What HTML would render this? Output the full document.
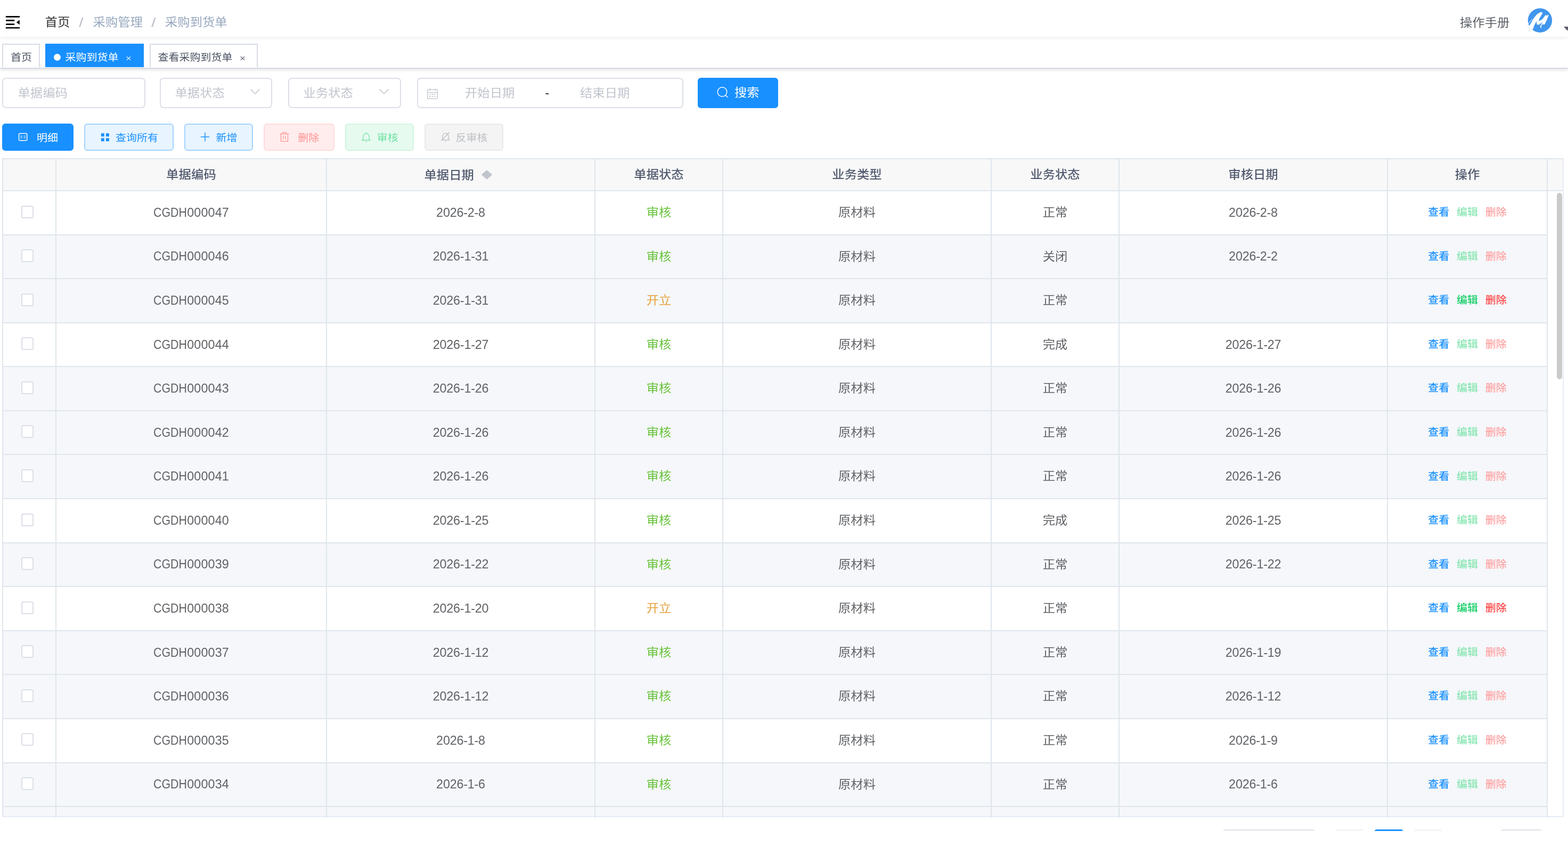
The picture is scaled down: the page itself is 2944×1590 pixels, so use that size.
<!DOCTYPE html>
<html lang="zh-CN">
<head>
<meta charset="utf-8">
<title>采购到货单</title>
<style>
*{box-sizing:border-box;margin:0;padding:0}
html,body{width:2944px;height:1590px;overflow:hidden;background:#fff}
#app{position:absolute;left:0;top:0;width:2944px;height:1590px;overflow:hidden;will-change:transform}
body{position:relative;font-family:"Liberation Sans","Noto Sans CJK SC",sans-serif;font-size:23.33px;color:#606266;-webkit-font-smoothing:antialiased}
.k{display:inline-block;transform:scaleY(.92);transform-origin:50% 50%}
.fc{display:flex;align-items:center;justify-content:center;white-space:nowrap}
/* navbar */
#nav{position:absolute;left:0;top:0;width:2944px;height:69px;background:#fff;box-shadow:0 2px 7px rgba(0,21,41,.08);z-index:3}
#ham{position:absolute;left:10px;top:29.8px;width:28px;height:24px}
.bc{position:absolute;top:-0.4px;height:84px;line-height:84px;font-size:23.33px;white-space:nowrap}
.bc.h{color:#303133}
.bc.l{color:#97a8be}
.bc.s{color:#c0c4cc;font-weight:700;display:inline-block;transform:skewX(-8deg)}
#manual{position:absolute;left:2741px;top:0;height:86px;line-height:86px;font-size:23.33px;color:#5a5e66;white-space:nowrap}
#avatar{position:absolute;left:2866px;top:15px;width:50px;height:48px}
#caret{position:absolute;left:2936px;top:49.8px;width:14px;height:8px}
/* tags */
#tags{position:absolute;left:0;top:69px;width:2944px;height:60px;background:#fff;border-bottom:2px solid #d8dce5;box-shadow:0 2px 6px 0 rgba(0,0,0,.12),0 0 5px 0 rgba(0,0,0,.04);z-index:2}
.tag{position:absolute;top:13px;height:44px;border:2px solid #d8dce5;border-bottom:0;font-size:20px;color:#495060;background:#fff;white-space:nowrap}
.tag span{position:absolute;top:1.5px;height:44px;line-height:44px}
.tag.act{background:#1890ff;border-color:#1890ff;color:#fff}
.tag .dot{position:absolute;width:13.4px;height:13.4px;border-radius:50%;background:#fff}
.tag .x{font-size:17px}
/* form */
.inp{position:absolute;top:146px;height:57px;border:2px solid #dcdfe6;border-radius:7px;background:#fff;color:#c0c4cc;font-size:23.33px}
.inp span{position:absolute;top:0.6px;height:53px;line-height:53px;white-space:nowrap}
.inp svg{position:absolute}
.btn{position:absolute;border-radius:6px;white-space:nowrap}
.btn span{position:absolute;top:0;white-space:nowrap}
.btn svg{position:absolute}
#search{left:1310px;top:146px;width:151px;height:57px;background:#1890ff;color:#fff;font-size:23.33px}
.b2{top:232px;height:51px;font-size:20px;border:2px solid}
.b2 span{top:1.7px;height:47px;line-height:47px}
/* table */
#tb{position:absolute;left:4px;top:297px;width:2932px;height:1237px;border:2px solid #dfe6ec;border-right-color:#e6ebf5;border-bottom-color:#e6ebf5;overflow:hidden;background:#fff}
#tb .in{position:absolute;left:-6px;top:-299px;width:2944px;height:1590px}
.th,.tr{position:absolute;left:6px;width:2900px}
.th .c{padding-bottom:4.8px}
.th{top:299px;height:60px;background:#f8f8f9;border-bottom:2px solid #dfe6ec;color:#515a6e;font-weight:500;width:2928px}
.tr{height:82.58px;border-bottom:2px solid #dfe6ec;background:#fff}
.tr.g{background:#f5f7fa}
.c{position:absolute;top:0;height:100%;border-right:2px solid #dfe6ec;display:flex;align-items:center;justify-content:center;white-space:nowrap}
.c1{left:0;width:100px}
.c2{left:100px;width:508px}
.c3{left:608px;width:504px}
.c4{left:1112px;width:240px}
.c5{left:1352px;width:504px}
.c6{left:1856px;width:240px}
.c7{left:2096px;width:504px}
.c8{left:2600px;width:300px}
.c9{left:2900px;width:28px;border-right:0}
.cb{position:absolute;left:34.4px;top:26.5px;width:22.5px;height:24px;border:2px solid #dcdfe6;border-radius:3.5px;background:#fff}
.z{padding-bottom:4.6px}
.L{display:inline-block;transform:scaleX(.917);transform-origin:0 50%;margin-right:-5.6px;letter-spacing:0}
.c2{letter-spacing:.13px}
.D{letter-spacing:-.2px}
.s-ok{color:#67c23a}
.s-open{color:#e6a23c}
.a{font-size:20px;font-weight:500;margin:0 6.85px;display:inline-block;transform:scaleY(.94)}
.c8.z{padding-bottom:3.4px}
.a.v{color:#1890ff}
.a.e{color:#89e6b3}
.a.d{color:#ffa4a4}
.a.e.on{color:#13ce66}
.a.d.on{color:#ff4949}
.sort{position:absolute;left:289.9px;top:19.5px;width:20px;height:18px}
.tk{position:absolute;top:1532px;width:2px;height:3px;background:#dfe6ec}
#thumb{position:absolute;left:2923px;top:362px;width:10px;height:350px;border-radius:5px;background:#cacaca}
.pg{position:absolute;top:1557px;height:40px}
#mask{position:absolute;left:0;top:1560px;width:2944px;height:30px;background:#fff}
</style>
</head>
<body>
<div id="app">
<div id="nav">
  <svg id="ham" viewBox="0 0 28 24"><rect x="0.6" y="0" width="26.6" height="2.7" rx="1.2" fill="#000"/><rect x="0.9" y="7.1" width="16.5" height="2.7" rx="1.2" fill="#000"/><rect x="0.9" y="14.2" width="16.5" height="2.7" rx="1.2" fill="#000"/><rect x="0.6" y="21" width="26.6" height="2.6" rx="1.2" fill="#000"/><path d="M20.7 11.9 L26.8 7.5 L26.8 16.3 Z" fill="#000"/></svg>
  <span class="bc h k" style="left:84.6px">首页</span>
  <span class="bc s" style="left:148.6px">/</span>
  <span class="bc l k" style="left:174.6px">采购管理</span>
  <span class="bc s" style="left:285.1px">/</span>
  <span class="bc l k" style="left:310px">采购到货单</span>
  <span id="manual" class="k">操作手册</span>
  <svg id="avatar" viewBox="0 0 50 48"><circle cx="25.4" cy="23.3" r="22.7" fill="#4096ee"/><path d="M5.1 34.4 L10.3 25.4 L14.8 17.9 L20.4 11.6 L26.0 8.2 L28.7 8.0 L29.8 9.3 L28.7 12.0 L26.0 16.4 L23.8 20.2 L22.9 23.2 L23.6 24.9 L27.9 22.8 L31.6 19.4 L34.6 14.9 L36.5 13.3 L38.0 14.6 L39.5 14.2 L41.7 13.1 L39.1 19.4 L36.5 25.4 L34.1 30.6 L29.0 30.8 L27.9 33.6 L27.5 37.0 L25.9 36.6 L26.4 33.6 L28.7 29.9 L31.6 23.2 L27.9 28.0 L24.2 30.6 L21.2 31.4 L19.5 29.9 L19.3 26.9 L20.4 23.2 L17.4 26.9 L14.4 32.5 L12.2 39.2 L10.7 40.6 L5.5 44.5 L0.2 34.4 Z" fill="#fff" stroke="#fff" stroke-width="0.6" stroke-linejoin="round"/><path d="M2.9 29.9 L11.1 20.6" stroke="#fff" stroke-width="1" fill="none"/><path d="M3.6 30.6 C1.2 33 0.8 36 3.2 36.6 L5.6 35.2 M4.6 36.4 L6.8 38.4 L4.8 39 L6.4 41 L4.6 41.8 L6 43.8 L5.2 44.8 L10.4 41" stroke="#b9d7f8" stroke-width="0.7" fill="none" stroke-dasharray="1.6 0.9"/></svg>
  <svg id="caret" viewBox="0 0 14 8"><path d="M0 0 L13.2 0 L6.6 7.6 Z" fill="#5a5e66"/></svg>
</div>
<div id="tags">
  <div class="tag" style="left:4px;width:71px"><span class="k" style="left:13.9px">首页</span></div>
  <div class="tag act" style="left:85px;width:185px"><i class="dot" style="left:13.7px;top:16.5px"></i><span class="k" style="left:35.4px">采购到货单</span><svg style="position:absolute;left:150.4px;top:21.2px" width="9" height="9" viewBox="0 0 9 9"><path d="M0.8 1.1 L8.2 7.9 M8.2 1.1 L0.8 7.9" stroke="#fff" stroke-width="1.15" fill="none"/></svg></div>
  <div class="tag" style="left:281px;width:203px"><span class="k" style="left:13.5px">查看采购到货单</span><svg style="position:absolute;left:167.7px;top:21.2px" width="9" height="9" viewBox="0 0 9 9"><path d="M0.8 1.1 L8.2 7.9 M8.2 1.1 L0.8 7.9" stroke="#495060" stroke-width="1.15" fill="none"/></svg></div>
</div>

<div class="inp" style="left:4px;width:269px"><span class="k" style="left:27.5px">单据编码</span></div>
<div class="inp" style="left:300px;width:211px"><span class="k" style="left:26.5px">单据状态</span>
  <svg style="left:166.2px;top:17.4px" width="22" height="14" viewBox="0 0 22 14"><path d="M2.6 2.6 L11 11 L19.4 2.6" fill="none" stroke="#c0c4cc" stroke-width="1.5"/></svg></div>
<div class="inp" style="left:541px;width:212px"><span class="k" style="left:26.6px">业务状态</span>
  <svg style="left:167.2px;top:17.4px" width="22" height="14" viewBox="0 0 22 14"><path d="M2.6 2.6 L11 11 L19.4 2.6" fill="none" stroke="#c0c4cc" stroke-width="1.5"/></svg></div>
<div class="inp" style="left:783px;width:500px">
  <svg style="left:14.8px;top:15.6px" width="24" height="24" viewBox="0 0 24 24"><g fill="none" stroke="#c0c4cc" stroke-width="1.3"><rect x="2.6" y="4.4" width="18.8" height="17" rx="0.8"/><path d="M2.6 9.6 H21.4 M7.2 2 V6.6 M16.8 2 V6.6"/></g><g fill="#c0c4cc"><rect x="6" y="12.4" width="2.6" height="1.7"/><rect x="10.7" y="12.4" width="2.6" height="1.7"/><rect x="15.4" y="12.4" width="2.6" height="1.7"/><rect x="6" y="16.4" width="2.6" height="1.7"/><rect x="10.7" y="16.4" width="2.6" height="1.7"/><rect x="15.4" y="16.4" width="2.6" height="1.7"/></g></svg>
  <span class="k" style="left:88px">开始日期</span><span style="left:238.5px;top:0;color:#303133">-</span><span class="k" style="left:304px">结束日期</span></div>
<div class="btn" id="search">
  <svg style="left:34px;top:16px" width="26" height="26" viewBox="0 0 26 26"><circle cx="12" cy="10.5" r="8.75" fill="none" stroke="#fff" stroke-width="1.45"/><path d="M18.3 16.8 L22 20.6" stroke="#fff" stroke-width="1.45" stroke-linecap="round"/></svg>
  <span class="k" style="left:68.9px;top:0.3px;height:57px;line-height:57px">搜索</span></div>

<div class="btn b2" style="left:4px;width:134px;background:#1890ff;border-color:#1890ff;color:#fff">
  <svg style="left:28px;top:15px" width="20" height="17" viewBox="0 0 20 17"><rect x="1.5" y="1.5" width="15.2" height="13.2" rx="2" fill="none" stroke="#fff" stroke-width="1.5"/><path d="M5.6 5 V11.2 M12.7 5 V11.2" stroke="#fff" stroke-width="1.1"/><rect x="8.5" y="6" width="1.3" height="1.3" fill="#fff"/><rect x="8.5" y="9" width="1.3" height="1.3" fill="#fff"/></svg>
  <span class="k" style="left:63px">明细</span></div>
<div class="btn b2" style="left:158px;width:168px;background:#e8f4ff;border-color:#a3d3ff;color:#1890ff">
  <svg style="left:28.5px;top:14.8px" width="17" height="17" viewBox="0 0 17 17"><g fill="#1890ff"><rect x="0.8" y="1.2" width="6" height="6" rx="0.5"/><rect x="9.9" y="1.2" width="6" height="6" rx="0.5"/><rect x="0.8" y="10.3" width="6" height="6" rx="0.5"/><rect x="9.9" y="10.3" width="6" height="6" rx="0.5"/></g></svg>
  <span class="k" style="left:57px">查询所有</span></div>
<div class="btn b2" style="left:346px;width:129px;background:#e8f4ff;border-color:#a3d3ff;color:#1890ff">
  <svg style="left:28px;top:14px" width="18" height="18" viewBox="0 0 18 18"><path d="M9 0.8 V17.2 M0.8 9 H17.2" stroke="#1890ff" stroke-width="1.5"/></svg>
  <span class="k" style="left:57.4px">新增</span></div>
<div class="btn b2" style="left:495px;width:133px;background:#ffeded;border-color:#ffdbdb;color:#ff9292">
  <svg style="left:27.8px;top:12.8px" width="18" height="20" viewBox="0 0 18 20"><g fill="none" stroke="#ff9292" stroke-width="1.25"><path d="M0.4 4.4 H17.6"/><path d="M6 4.2 V1.7 H12 V4.2"/><path d="M2.5 4.6 V18.4 H15.5 V4.6"/><path d="M7 7.6 V14.6 M11 7.6 V14.6"/></g></svg>
  <span class="k" style="left:62.2px">删除</span></div>
<div class="btn b2" style="left:648px;width:129px;background:#e7faf0;border-color:#d0f5e0;color:#71e2a3">
  <svg style="left:27.5px;top:13.5px" width="19" height="20" viewBox="0 0 19 20"><g fill="none" stroke="#71e2a3" stroke-width="1.3"><path d="M3.8 15 V9 C3.8 5.2 6.2 2.7 9.5 2.7 C12.8 2.7 15.2 5.2 15.2 9 V15"/><path d="M0.8 15.3 H18.2"/><path d="M8.3 18 H10.7"/><path d="M9.5 1 V2.7"/></g></svg>
  <span class="k" style="left:57.8px">审核</span></div>
<div class="btn b2" style="left:797px;width:148px;background:#f4f4f5;border-color:#e9e9eb;color:#bcbec2">
  <svg style="left:27.5px;top:13px" width="19" height="20" viewBox="0 0 19 20"><g fill="none" stroke="#bcbec2" stroke-width="1.3"><path d="M3.8 15.4 V9.4 C3.8 5.6 6.2 3.1 9.5 3.1 C12.8 3.1 15.2 5.6 15.2 9.4 V15.4"/><path d="M0.8 15.7 H18.2"/><path d="M8.3 18.4 H10.7"/><path d="M16.6 1.2 L2.6 16.2"/></g></svg>
  <span class="k" style="left:56.6px">反审核</span></div>

<div id="tb"><div class="in">
<div class="th"><div class="c c1"></div><div class="c c2"><span class="k">单据编码</span></div><div class="c c3" style="padding-right:43.6px;padding-bottom:2.6px"><span class="k">单据日期</span><svg class="sort" viewBox="0 0 20 18"><path d="M10 0.3 L19.9 8.6 L18.6 9 L19.9 9.4 L10 17.7 L0.1 9.4 L1.4 9 L0.1 8.6 Z" fill="#c0c4cc"/></svg></div><div class="c c4"><span class="k">单据状态</span></div><div class="c c5"><span class="k">业务类型</span></div><div class="c c6"><span class="k">业务状态</span></div><div class="c c7"><span class="k">审核日期</span></div><div class="c c8"><span class="k">操作</span></div><div class="c c9"></div></div>
<div class="tr" style="top:359.0px"><div class="c c1"><i class="cb"></i></div><div class="c c2"><span class="L">CGDH</span>000047</div><div class="c c3 D">2026-2-8</div><div class="c c4 z s-ok"><span class="k">审核</span></div><div class="c c5 z"><span class="k">原材料</span></div><div class="c c6 z"><span class="k">正常</span></div><div class="c c7 D">2026-2-8</div><div class="c c8 z"><span class="a v">查看</span><span class="a e">编辑</span><span class="a d">删除</span></div></div>
<div class="tr g" style="top:441.58px"><div class="c c1"><i class="cb"></i></div><div class="c c2"><span class="L">CGDH</span>000046</div><div class="c c3 D">2026-1-31</div><div class="c c4 z s-ok"><span class="k">审核</span></div><div class="c c5 z"><span class="k">原材料</span></div><div class="c c6 z"><span class="k">关闭</span></div><div class="c c7 D">2026-2-2</div><div class="c c8 z"><span class="a v">查看</span><span class="a e">编辑</span><span class="a d">删除</span></div></div>
<div class="tr g" style="top:524.16px"><div class="c c1"><i class="cb"></i></div><div class="c c2"><span class="L">CGDH</span>000045</div><div class="c c3 D">2026-1-31</div><div class="c c4 z s-open"><span class="k">开立</span></div><div class="c c5 z"><span class="k">原材料</span></div><div class="c c6 z"><span class="k">正常</span></div><div class="c c7 D"></div><div class="c c8 z"><span class="a v">查看</span><span class="a e on">编辑</span><span class="a d on">删除</span></div></div>
<div class="tr" style="top:606.74px"><div class="c c1"><i class="cb"></i></div><div class="c c2"><span class="L">CGDH</span>000044</div><div class="c c3 D">2026-1-27</div><div class="c c4 z s-ok"><span class="k">审核</span></div><div class="c c5 z"><span class="k">原材料</span></div><div class="c c6 z"><span class="k">完成</span></div><div class="c c7 D">2026-1-27</div><div class="c c8 z"><span class="a v">查看</span><span class="a e">编辑</span><span class="a d">删除</span></div></div>
<div class="tr g" style="top:689.32px"><div class="c c1"><i class="cb"></i></div><div class="c c2"><span class="L">CGDH</span>000043</div><div class="c c3 D">2026-1-26</div><div class="c c4 z s-ok"><span class="k">审核</span></div><div class="c c5 z"><span class="k">原材料</span></div><div class="c c6 z"><span class="k">正常</span></div><div class="c c7 D">2026-1-26</div><div class="c c8 z"><span class="a v">查看</span><span class="a e">编辑</span><span class="a d">删除</span></div></div>
<div class="tr g" style="top:771.9px"><div class="c c1"><i class="cb"></i></div><div class="c c2"><span class="L">CGDH</span>000042</div><div class="c c3 D">2026-1-26</div><div class="c c4 z s-ok"><span class="k">审核</span></div><div class="c c5 z"><span class="k">原材料</span></div><div class="c c6 z"><span class="k">正常</span></div><div class="c c7 D">2026-1-26</div><div class="c c8 z"><span class="a v">查看</span><span class="a e">编辑</span><span class="a d">删除</span></div></div>
<div class="tr g" style="top:854.48px"><div class="c c1"><i class="cb"></i></div><div class="c c2"><span class="L">CGDH</span>000041</div><div class="c c3 D">2026-1-26</div><div class="c c4 z s-ok"><span class="k">审核</span></div><div class="c c5 z"><span class="k">原材料</span></div><div class="c c6 z"><span class="k">正常</span></div><div class="c c7 D">2026-1-26</div><div class="c c8 z"><span class="a v">查看</span><span class="a e">编辑</span><span class="a d">删除</span></div></div>
<div class="tr" style="top:937.06px"><div class="c c1"><i class="cb"></i></div><div class="c c2"><span class="L">CGDH</span>000040</div><div class="c c3 D">2026-1-25</div><div class="c c4 z s-ok"><span class="k">审核</span></div><div class="c c5 z"><span class="k">原材料</span></div><div class="c c6 z"><span class="k">完成</span></div><div class="c c7 D">2026-1-25</div><div class="c c8 z"><span class="a v">查看</span><span class="a e">编辑</span><span class="a d">删除</span></div></div>
<div class="tr g" style="top:1019.64px"><div class="c c1"><i class="cb"></i></div><div class="c c2"><span class="L">CGDH</span>000039</div><div class="c c3 D">2026-1-22</div><div class="c c4 z s-ok"><span class="k">审核</span></div><div class="c c5 z"><span class="k">原材料</span></div><div class="c c6 z"><span class="k">正常</span></div><div class="c c7 D">2026-1-22</div><div class="c c8 z"><span class="a v">查看</span><span class="a e">编辑</span><span class="a d">删除</span></div></div>
<div class="tr" style="top:1102.22px"><div class="c c1"><i class="cb"></i></div><div class="c c2"><span class="L">CGDH</span>000038</div><div class="c c3 D">2026-1-20</div><div class="c c4 z s-open"><span class="k">开立</span></div><div class="c c5 z"><span class="k">原材料</span></div><div class="c c6 z"><span class="k">正常</span></div><div class="c c7 D"></div><div class="c c8 z"><span class="a v">查看</span><span class="a e on">编辑</span><span class="a d on">删除</span></div></div>
<div class="tr g" style="top:1184.8px"><div class="c c1"><i class="cb"></i></div><div class="c c2"><span class="L">CGDH</span>000037</div><div class="c c3 D">2026-1-12</div><div class="c c4 z s-ok"><span class="k">审核</span></div><div class="c c5 z"><span class="k">原材料</span></div><div class="c c6 z"><span class="k">正常</span></div><div class="c c7 D">2026-1-19</div><div class="c c8 z"><span class="a v">查看</span><span class="a e">编辑</span><span class="a d">删除</span></div></div>
<div class="tr g" style="top:1267.38px"><div class="c c1"><i class="cb"></i></div><div class="c c2"><span class="L">CGDH</span>000036</div><div class="c c3 D">2026-1-12</div><div class="c c4 z s-ok"><span class="k">审核</span></div><div class="c c5 z"><span class="k">原材料</span></div><div class="c c6 z"><span class="k">正常</span></div><div class="c c7 D">2026-1-12</div><div class="c c8 z"><span class="a v">查看</span><span class="a e">编辑</span><span class="a d">删除</span></div></div>
<div class="tr" style="top:1349.96px"><div class="c c1"><i class="cb"></i></div><div class="c c2"><span class="L">CGDH</span>000035</div><div class="c c3 D">2026-1-8</div><div class="c c4 z s-ok"><span class="k">审核</span></div><div class="c c5 z"><span class="k">原材料</span></div><div class="c c6 z"><span class="k">正常</span></div><div class="c c7 D">2026-1-9</div><div class="c c8 z"><span class="a v">查看</span><span class="a e">编辑</span><span class="a d">删除</span></div></div>
<div class="tr g" style="top:1432.54px"><div class="c c1"><i class="cb"></i></div><div class="c c2"><span class="L">CGDH</span>000034</div><div class="c c3 D">2026-1-6</div><div class="c c4 z s-ok"><span class="k">审核</span></div><div class="c c5 z"><span class="k">原材料</span></div><div class="c c6 z"><span class="k">正常</span></div><div class="c c7 D">2026-1-6</div><div class="c c8 z"><span class="a v">查看</span><span class="a e">编辑</span><span class="a d">删除</span></div></div>
<div class="tr g" style="top:1515.12px"><div class="c c1"></div><div class="c c2"></div><div class="c c3"></div><div class="c c4"></div><div class="c c5"></div><div class="c c6"></div><div class="c c7"></div><div class="c c8"></div></div>
</div></div>
<i class="tk" style="left:104px"></i><i class="tk" style="left:612px"></i><i class="tk" style="left:1116px"></i><i class="tk" style="left:1356px"></i><i class="tk" style="left:1860px"></i><i class="tk" style="left:2100px"></i><i class="tk" style="left:2604px"></i><i class="tk" style="left:2904px"></i>
<div id="thumb"></div>
<div class="pg" style="left:2295.7px;width:173.6px;border:2px solid #dcdfe6;border-radius:5.5px"></div>
<div class="pg" style="left:2507px;width:53px;background:#f4f4f5;border-radius:4px"></div>
<div class="pg" style="left:2581px;width:53px;background:#1890ff;border-radius:4px"></div>
<div class="pg" style="left:2654px;width:54px;background:#f4f4f5;border-radius:4px"></div>
<div class="pg" style="left:2816.7px;width:78.4px;border:2px solid #dcdfe6;border-radius:5.5px"></div>
<div id="mask"></div>
</div>
</body>
</html>
